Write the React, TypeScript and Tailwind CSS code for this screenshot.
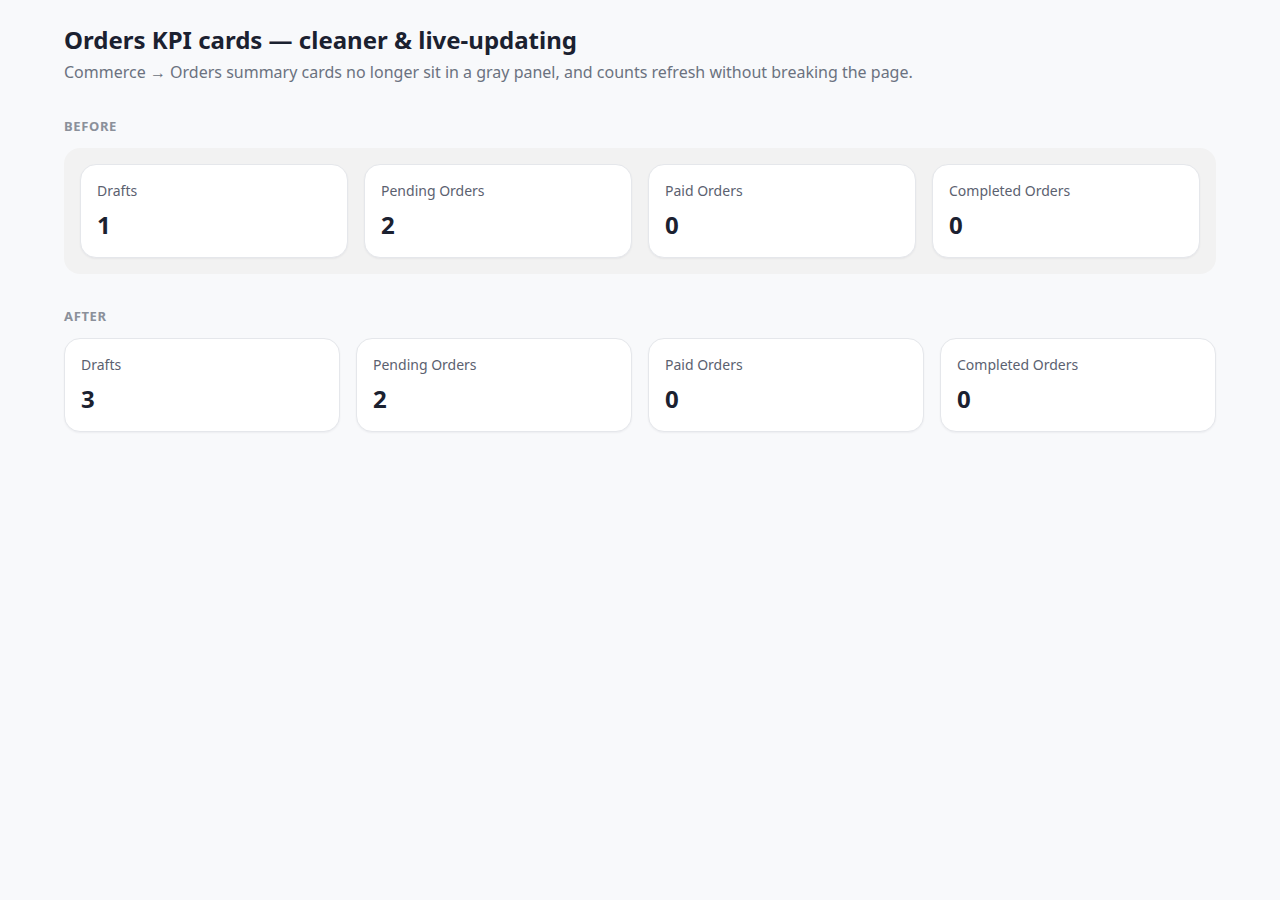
import React from "react";

type Kpi = { label: string; value: number };

const before: Kpi[] = [
  { label: "Drafts", value: 1 },
  { label: "Pending Orders", value: 2 },
  { label: "Paid Orders", value: 0 },
  { label: "Completed Orders", value: 0 },
];

const after: Kpi[] = [
  { label: "Drafts", value: 3 },
  { label: "Pending Orders", value: 2 },
  { label: "Paid Orders", value: 0 },
  { label: "Completed Orders", value: 0 },
];

function KpiCard({ kpi }: { kpi: Kpi }) {
  return (
    <div className="rounded-2xl border border-[#e5e7eb] bg-white p-4 shadow-[0_1px_2px_rgba(16,24,40,0.05)]">
      <div className="text-sm leading-5 text-[#5b6170]">{kpi.label}</div>
      <div className="mt-2 text-2xl font-bold leading-8 text-[#1b2130]">{kpi.value}</div>
    </div>
  );
}

function SectionLabel({ children }: { children: React.ReactNode }) {
  return (
    <div className="mb-3 text-[13px] font-bold uppercase leading-5 tracking-wider text-[#8b909a]">
      {children}
    </div>
  );
}

export default function App() {
  return (
    <div
      className="min-h-[900px] bg-[#f8f9fb] px-16 pt-6"
      style={{ fontFamily: '"Noto Sans", "Open Sans", sans-serif' }}
    >
      <h1 className="text-2xl font-bold leading-8 text-[#1b2130]">
        Orders KPI cards — cleaner &amp; live-updating
      </h1>
      <p className="mt-1 text-base leading-6 text-[#6b7280]">
        Commerce → Orders summary cards no longer sit in a gray panel, and counts refresh without breaking the page.
      </p>

      <section className="mt-8">
        <SectionLabel>Before</SectionLabel>
        <div className="grid grid-cols-4 gap-4 rounded-2xl bg-[#f2f2f2] p-4">
          {before.map((k) => (
            <KpiCard key={k.label} kpi={k} />
          ))}
        </div>
      </section>

      <section className="mt-8">
        <SectionLabel>After</SectionLabel>
        <div className="grid grid-cols-4 gap-4">
          {after.map((k) => (
            <KpiCard key={k.label} kpi={k} />
          ))}
        </div>
      </section>
    </div>
  );
}
